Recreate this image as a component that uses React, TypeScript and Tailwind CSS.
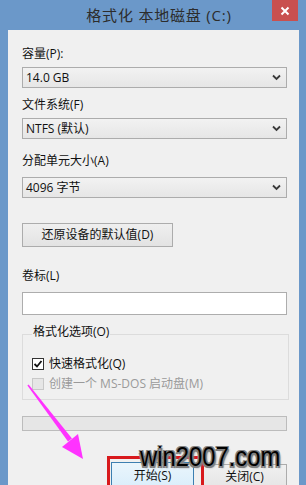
import React from "react";

const FONT = '"Open Sans", "Noto Sans", "Noto Sans CJK SC", sans-serif';

function Chevron() {
  return (
    <svg width="9" height="7" viewBox="0 0 9 7" className="block">
      <path d="M1 1.5 L4.5 5 L8 1.5" fill="none" stroke="#3a3a3a" strokeWidth="1.8" />
    </svg>
  );
}

function Select({ value }: { value: string }) {
  return (
    <div className="h-[21px] border border-[#acacac] bg-gradient-to-b from-[#f2f2f2] to-[#e6e6e6] flex items-center pl-[3px] pr-[5px]">
      <span className="flex-1 text-[12px] leading-[16px] text-[#111]">{value}</span>
      <Chevron />
    </div>
  );
}

export default function App() {
  return (
    <div
      className="relative w-[306px] h-[485px] overflow-hidden bg-[#6b98c9] flex flex-col"
      style={{ fontFamily: FONT }}
    >
      {/* title bar */}
      <div className="relative h-[30px] shrink-0 flex items-center justify-center pl-[12px]">
        <span className="text-[15px] leading-[20px] text-[#2c2c2c] tracking-[0.8px]">格式化 本地磁盘 (C:)</span>
        <div className="absolute right-[8px] top-0 w-[26px] h-[21px] bg-[#c9504f] flex items-center justify-center">
          <svg width="10" height="10" viewBox="0 0 10 10">
            <path d="M1.5 1.5 L8.5 8.5 M8.5 1.5 L1.5 8.5" stroke="#fff" strokeWidth="2" />
          </svg>
        </div>
      </div>

      {/* body */}
      <div className="flex-1 ml-[8px] mr-[7px] bg-[#f0f0f0] pl-[14px] pr-[12px] pt-[16px] flex flex-col">
        <div className="text-[12px] leading-[16px] text-[#111]">容量(P):</div>
        <div className="mt-[5px]"><Select value="14.0 GB" /></div>

        <div className="mt-[9px] text-[12px] leading-[16px] text-[#111]">文件系统(F)</div>
        <div className="mt-[5px]"><Select value="NTFS (默认)" /></div>

        <div className="mt-[14px] text-[12px] leading-[16px] text-[#111]">分配单元大小(A)</div>
        <div className="mt-[8px]"><Select value="4096 字节" /></div>

        <div className="mt-[25px] w-[151px] h-[24px] border border-[#acacac] bg-gradient-to-b from-[#efefef] to-[#e3e3e3] flex items-center justify-center text-[12px] text-[#111]">
          还原设备的默认值(D)
        </div>

        <div className="mt-[21px] text-[12px] leading-[16px] text-[#111]">卷标(L)</div>
        <div className="mt-[8px] h-[23px] border border-[#adadad] bg-white" />

        <div className="relative mt-[19px] h-[66px] border border-[#dcdcdc] mr-[-2px]">
          <span className="absolute left-[9px] top-[-11px] px-[1px] bg-[#f0f0f0] text-[12px] leading-[16px] text-[#111]">格式化选项(O)</span>
          <div className="absolute left-[9px] top-[21px] flex items-center gap-[5px]">
            <div className="w-[12px] h-[12px] border border-[#333] bg-white flex items-center justify-center">
              <svg width="10" height="10" viewBox="0 0 10 10">
                <path d="M1.5 5 L4 7.5 L8.5 2" fill="none" stroke="#111" strokeWidth="1.8" />
              </svg>
            </div>
            <span className="text-[12px] leading-[16px] text-[#111]">快速格式化(Q)</span>
          </div>
          <div className="absolute left-[9px] top-[41px] flex items-center gap-[5px]">
            <div className="w-[12px] h-[12px] border border-[#c8c8c8] bg-[#e6e6e6]" />
            <span className="text-[12px] leading-[16px] text-[#9a9a9a]">创建一个 MS-DOS 启动盘(M)</span>
          </div>
        </div>

        <div className="mt-[16px] h-[15px] border border-[#bcbcbc] bg-[#e6e6e6]" />

        <div className="relative mt-[31px] flex items-start gap-[8px] pl-[89px]">
          <div className="w-[84px] h-[28px] border border-[#3c7fb1] bg-gradient-to-b from-[#eaf5fc] to-[#d9eefb] flex items-center justify-center text-[12px] text-[#111]">
            开始(S)
          </div>
          <div className="mt-[2px] w-[86px] h-[26px] border border-[#acacac] bg-gradient-to-b from-[#f0f0f0] to-[#e5e5e5] flex items-center justify-center text-[12px] text-[#111]">
            关闭(C)
          </div>
        </div>
      </div>

      {/* red highlight rectangle */}
      <div className="absolute left-[107px] top-[456px] w-[97px] h-[40px] border-[3px] border-[#d8191c]" />

      {/* magenta arrow */}
      <svg className="absolute left-0 top-0" width="306" height="485" viewBox="0 0 306 485">
        <polygon points="28.6,384.5 27.4,385.5 68,441.5 72,438.5" fill="#ff33ff" />
        <polygon points="62,447 78,434 83,459" fill="#ff33ff" />
      </svg>

      {/* watermark */}
      <div
        className="absolute left-[140px] top-[439px] text-[28px] leading-[36px] text-black origin-left scale-x-[0.85] whitespace-nowrap"
        style={{ fontFamily: '"Liberation Sans", Arial, sans-serif', textShadow: "1.5px 1.5px 0 #808080, -1.5px -1.5px 0 #808080, 1.5px -1.5px 0 #808080, -1.5px 1.5px 0 #808080, 2px 2px 2px #999" }}
      >
        win2007.com
      </div>
    </div>
  );
}
